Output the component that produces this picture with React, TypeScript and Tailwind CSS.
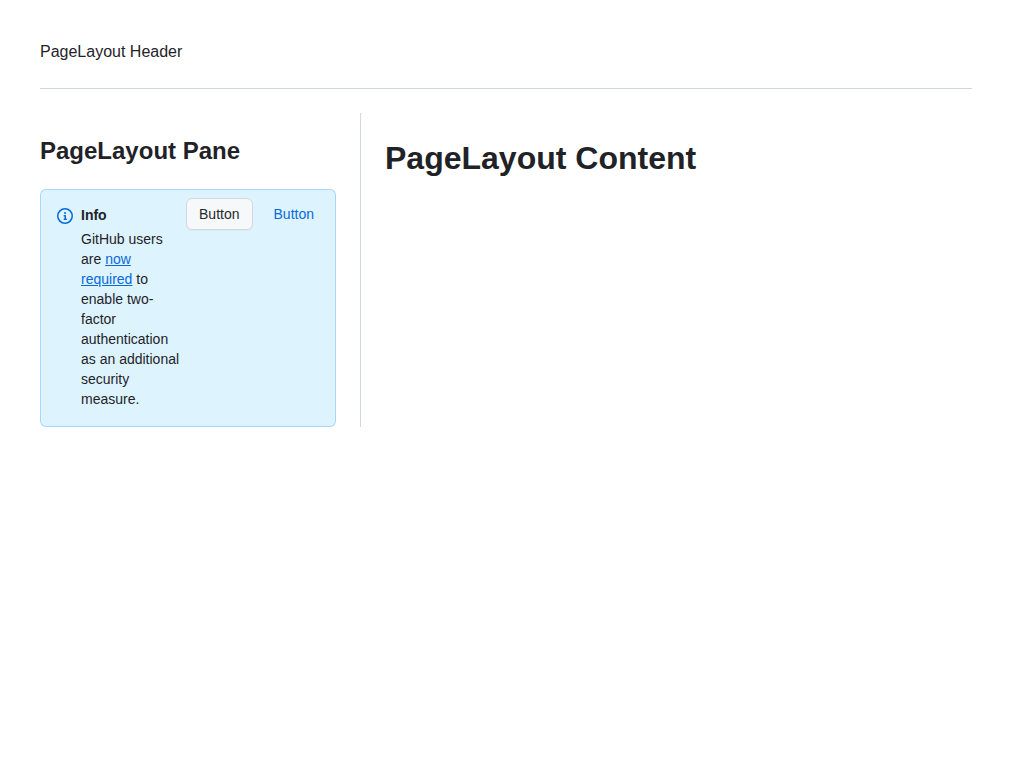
import React from "react";

function InfoIcon() {
  return (
    <svg viewBox="0 0 16 16" className="size-4 fill-[#0969da]" aria-hidden="true">
      <path d="M0 8a8 8 0 1 1 16 0A8 8 0 0 1 0 8Zm8-6.5a6.5 6.5 0 1 0 0 13 6.5 6.5 0 0 0 0-13ZM6.5 7.75A.75.75 0 0 1 7.25 7h1a.75.75 0 0 1 .75.75v2.75h.25a.75.75 0 0 1 0 1.5h-2a.75.75 0 0 1 0-1.5h.25v-2h-.25a.75.75 0 0 1-.75-.75ZM8 6a1 1 0 1 1 0-2 1 1 0 0 1 0 2Z" />
    </svg>
  );
}

function Banner() {
  return (
    <section
      aria-label="Info"
      className="flex items-start rounded-md border border-[#54aeff]/40 bg-[#ddf4ff] p-2 text-sm leading-5"
    >
      <div className="shrink-0 p-2 pt-2.5">
        <InfoIcon />
      </div>
      <div className="flex min-w-0 flex-1 justify-between gap-1">
        <div className="flex min-w-0 flex-1 flex-col gap-1 pt-[7px] pb-[9px]">
          <h3 className="font-semibold">Info</h3>
          <p>
            GitHub users are{" "}
            <a href="#required" className="text-[#0969da] underline">
              now required
            </a>{" "}
            to enable two-factor authentication as an additional security measure.
          </p>
        </div>
        <div className="flex shrink-0 items-start gap-2">
          <button
            type="button"
            className="h-8 rounded-md border border-[#d1d9e0] bg-[#f6f8fa] px-3 font-medium text-[#25292e] shadow-[0_1px_0_0_#1f23280a]"
          >
            Button
          </button>
          <button
            type="button"
            className="h-8 rounded-md border border-transparent px-3 font-medium text-[#0969da]"
          >
            Button
          </button>
        </div>
      </div>
    </section>
  );
}

export default function App() {
  return (
    <div className="bg-white p-10 font-['Liberation_Sans',Arial,sans-serif] text-base text-[#1f2328]">
      <header className="mb-6 border-b border-[#d0d7de] pb-6">PageLayout Header</header>
      <div className="flex">
        <aside className="w-80 shrink-0 pr-6">
          <h2 className="my-5 text-2xl leading-9 font-bold">PageLayout Pane</h2>
          <Banner />
        </aside>
        <main className="min-w-0 flex-1 border-l border-[#d0d7de] pl-6">
          <h1 className="my-[21px] text-[32px] leading-12 font-bold">PageLayout Content</h1>
        </main>
      </div>
    </div>
  );
}
